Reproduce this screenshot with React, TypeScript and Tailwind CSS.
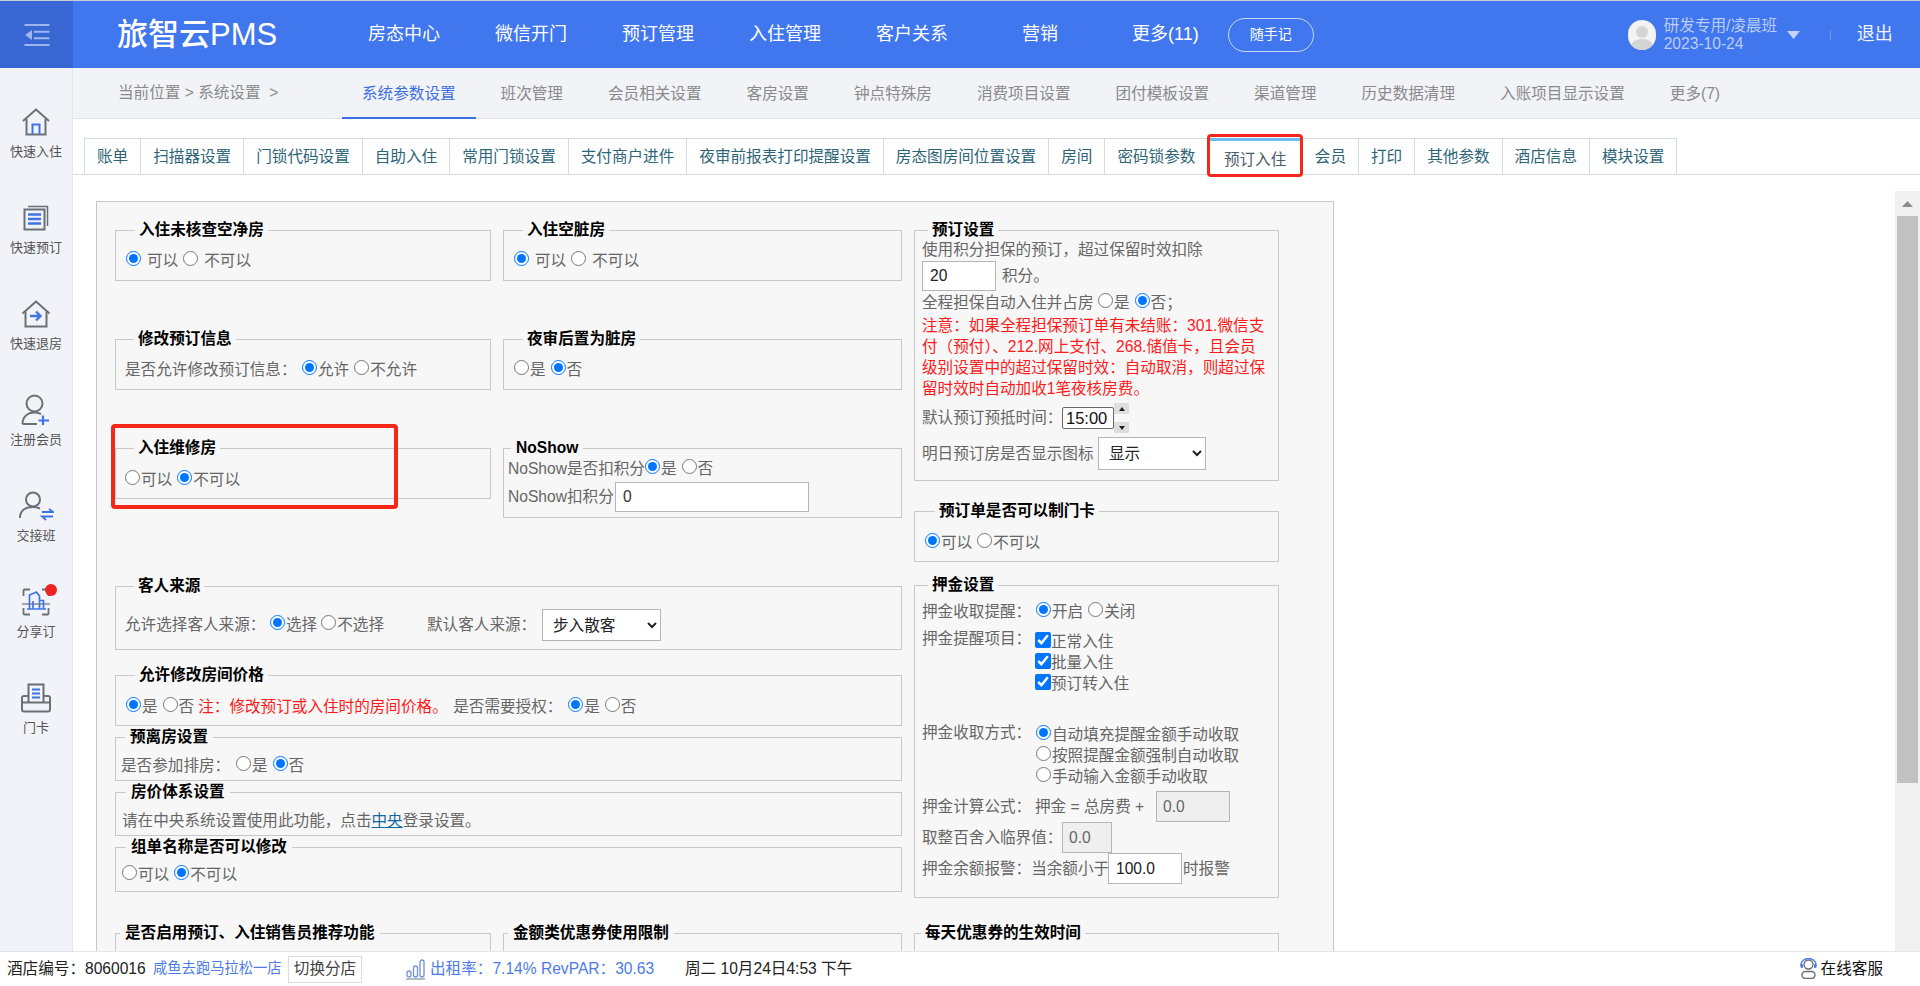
import React from "react";

const tabs: [string, string][] = [
  ["账单", ""],
  ["扫描器设置", ""],
  ["门锁代码设置", ""],
  ["自助入住", ""],
  ["常用门锁设置", ""],
  ["支付商户进件", ""],
  ["夜审前报表打印提醒设置", ""],
  ["房态图房间位置设置", ""],
  ["房间", ""],
  ["密码锁参数", ""],
  ["预订入住", "active"],
  ["会员", ""],
  ["打印", ""],
  ["其他参数", ""],
  ["酒店信息", ""],
  ["模块设置", ""],
];

const subnav = ["系统参数设置", "班次管理", "会员相关设置", "客房设置", "钟点特殊房", "消费项目设置", "团付模板设置", "渠道管理", "历史数据清理", "入账项目显示设置", "更多(7)"];

function Opt({ on, label, className = "", wide }: { on?: boolean; label: string; className?: string; wide?: boolean }) {
  return (
    <label className={`inline-flex items-center ${wide ? "gap-[6px]" : "gap-[1px]"} ${className}`}>
      <input type="radio" checked={!!on} readOnly className="w-[15px] h-[15px] mb-[4px] shrink-0" />
      <span>{label}</span>
    </label>
  );
}

function Box({ title, legend = "ml-[9px] px-[4px]", className = "", children }: { title: string; legend?: string; className?: string; children?: React.ReactNode }) {
  return (
    <fieldset className={`border border-[#c8c8c8] min-w-0 text-[#666] ${className}`}>
      <legend className={`font-bold text-black text-[15.6px] leading-[18px] ${legend}`}>{title}</legend>
      {children}
    </fieldset>
  );
}

function Row({ className = "", children }: { className?: string; children?: React.ReactNode }) {
  return <div className={`flex items-center h-[24px] whitespace-nowrap ${className}`}>{children}</div>;
}

const Gray = "#6b6f76";
const Blue = "#3f74e6";

const sideItems: { label: string; icon: React.ReactNode; badge?: boolean }[] = [
  {
    label: "快速入住",
    icon: (
      <svg width="30" height="28" viewBox="0 0 30 28" fill="none">
        <path d="M2 13 15 1.5 28 13" stroke={Gray} strokeWidth="2" />
        <path d="M5.5 11v15.5h19V11" stroke={Gray} strokeWidth="2" />
        <path d="M11.5 26V16.5h7V26" stroke={Blue} strokeWidth="2" />
      </svg>
    ),
  },
  {
    label: "快速预订",
    icon: (
      <svg width="26" height="26" viewBox="0 0 26 26" fill="none">
        <path d="M5 1.5h19.5V21" stroke={Gray} strokeWidth="1.5" />
        <rect x="1.5" y="4.5" width="20" height="20" stroke={Gray} strokeWidth="2" />
        <path d="M5 9.5h13M5 14h13M5 18.5h13" stroke={Blue} strokeWidth="2.4" />
      </svg>
    ),
  },
  {
    label: "快速退房",
    icon: (
      <svg width="30" height="28" viewBox="0 0 30 28" fill="none">
        <path d="M1.5 13.5 15 1.5 28.5 13.5" stroke={Gray} strokeWidth="2" />
        <path d="M4.5 11.5v15h21v-15" stroke={Gray} strokeWidth="2" />
        <path d="M9 16h10M15 11.5l4.5 4.5-4.5 4.5" stroke={Blue} strokeWidth="2.4" />
      </svg>
    ),
  },
  {
    label: "注册会员",
    icon: (
      <svg width="30" height="32" viewBox="0 0 30 32" fill="none">
        <circle cx="13.5" cy="9.5" r="8" stroke={Gray} strokeWidth="2" />
        <path d="M1.5 30c0-7 5-11.500 12-11.500 2.500 0 4.500.5 6.500 1.500M1.500 30H16" stroke={Gray} strokeWidth="2" />
        <path d="M22 21.500v9.500M17.500 26.500H28" stroke={Blue} strokeWidth="2.200" />
      </svg>
    ),
  },
  {
    label: "交接班",
    icon: (
      <svg width="36" height="30" viewBox="0 0 36 30" fill="none">
        <circle cx="15" cy="8.500" r="7" stroke={Gray} strokeWidth="2" />
        <path d="M2 27c0-7 5-11 13-11 3 0 5 .5 7 1.500" stroke={Gray} strokeWidth="2" />
        <path d="M24 21h11l-4-3M35 25.500H24l4 3.500" stroke={Blue} strokeWidth="1.800" />
      </svg>
    ),
  },
  {
    label: "分享订",
    badge: true,
    icon: (
      <svg width="28" height="28" viewBox="0 0 28 28" fill="none">
        <path d="M8 1.500H2.500a1 1 0 0 0-1 1V8M20 1.500h5.500a1 1 0 0 1 1 1V8M8 26.500H2.500a1 1 0 0 1-1-1V20M20 26.500h5.500a1 1 0 0 0 1-1V20" stroke={Gray} strokeWidth="1.800" />
        <path d="M0 16h28" stroke={Gray} strokeWidth="1.200" />
        <path d="M7.500 21V7l7-3 3 4v13M17.500 21v-8.500h4V21M11 21v-8" stroke={Blue} strokeWidth="1.700" />
        <path d="M5 21h19" stroke={Blue} strokeWidth="1.500" />
      </svg>
    ),
  },
  {
    label: "门卡",
    icon: (
      <svg width="30" height="30" viewBox="0 0 30 30" fill="none">
        <path d="M7.500 19V1.500h15V19" stroke={Gray} strokeWidth="2" />
        <path d="M7.500 13H3a2 2 0 0 0-2 2v11.500a2 2 0 0 0 2 2h24a2 2 0 0 0 2-2V15a2 2 0 0 0-2-2h-4.500M1 19.500h28" stroke={Gray} strokeWidth="2" />
        <path d="M11 6.500h8M11 10.500h8M11 14.500h8" stroke={Blue} strokeWidth="1.800" />
      </svg>
    ),
  },
];

export default function App() {
  return (
    <div className="h-[986px] w-[1920px] flex flex-col overflow-hidden bg-white text-[15.6px] text-[#666] font-['Liberation_Sans','Noto_Sans_CJK_SC',sans-serif]">
      {/* Header */}
      <header className="h-[68px] shrink-0 flex items-center bg-[#4076ee] border-t border-[#c9cdd6] text-white">
        <div className="w-[73px] h-full bg-[#3866d2] flex items-center justify-center">
          <svg width="26" height="22" viewBox="0 0 26 22" fill="none">
            <path d="M0.500 1h25M0.500 21h25M10 7.800h15.500M10 14.200h15.500" stroke="#9db7ee" strokeWidth="2" />
            <path d="M1 11l7-5v10z" fill="#9db7ee" />
          </svg>
        </div>
        <div className="ml-[44px] w-[251px] text-[31px] leading-none font-medium whitespace-nowrap">旅智云PMS</div>
        <nav className="flex items-center text-[18px] whitespace-nowrap">
          <span>房态中心</span>
          <span className="ml-[55px]">微信开门</span>
          <span className="ml-[55px]">预订管理</span>
          <span className="ml-[55px]">入住管理</span>
          <span className="ml-[55px]">客户关系</span>
          <span className="ml-[74px]">营销</span>
          <span className="ml-[74px]">更多(11)</span>
        </nav>
        <div className="ml-[29px] w-[86px] h-[34px] rounded-full border border-white/70 flex items-center justify-center text-[14px]">随手记</div>
        <div className="ml-[314px] w-[28px] h-[30px] rounded-full bg-[#f3f3f3] overflow-hidden shrink-0">
          <svg width="28" height="30" viewBox="0 0 28 30">
            <circle cx="14" cy="12" r="6" fill="#d4d4d4" />
            <ellipse cx="14" cy="26" rx="11" ry="7" fill="#d4d4d4" />
          </svg>
        </div>
        <div className="ml-[8px] w-[117px] flex flex-col text-[15.6px] leading-[18px] text-[#bccdf6] whitespace-nowrap">
          <span>研发专用/凌晨班</span>
          <span>2023-10-24</span>
        </div>
        <svg className="ml-[6px] shrink-0" width="13" height="8" viewBox="0 0 13 8"><path d="M0 0h13L6.500 8z" fill="#c4d3f7" /></svg>
        <div className="ml-[30px] w-px h-[10px] bg-[#6f97ef]" />
        <span className="ml-[26px] text-[18px] text-[#eef2fd]">退出</span>
      </header>

      <div className="flex-1 flex min-h-0">
        {/* Sidebar */}
        <aside className="w-[73px] shrink-0 bg-[#f1f3f8] border-r border-[#e4e7f0] pt-[36px] flex flex-col">
          {sideItems.map((it) => (
            <div key={it.label} className="h-[96px] shrink-0 flex flex-col items-center">
              <div className="relative h-[36px] w-full flex items-center justify-center">
                {it.icon}
                {it.badge && <span className="absolute left-[45px] top-[0px] w-[12px] h-[12px] rounded-full bg-[#ee2223]" />}
              </div>
              <span className="h-[24px] leading-[24px] text-[13px] text-[#555]">{it.label}</span>
            </div>
          ))}
        </aside>

        <div className="flex-1 min-w-0 flex flex-col">
          {/* Sub nav */}
          <div className="h-[51px] shrink-0 bg-[#f1f3f7] border-b border-[#dfe1e6] flex text-[#8a8a8a] whitespace-nowrap">
            <div className="ml-[45px] w-[224px] h-[50px] flex items-center">当前位置&nbsp;&gt;&nbsp;系统设置&nbsp;&nbsp;&gt;</div>
            {subnav.map((s, i) => (
              <div key={s} className={`px-[20px] mr-[5px] h-[51px] flex items-center ${i === 0 ? "text-[#3d6fe0] border-b-2 border-[#3a6fe0] pt-[2px]" : ""}`}>{s}</div>
            ))}
          </div>

          {/* Tabs */}
          <div className="h-[56px] shrink-0 pt-[19px]">
            <div className="h-[37px] border-b border-[#d2dcdc] pl-[11px] flex">
              {tabs.map(([t, a], i) =>
                a ? (
                  <div key={t} className="h-[37px] px-[15.500px] bg-white border-t-[3px] border-t-[#6cbdf0] border-l border-l-[#d2dcdc] text-[#4c5c66] flex items-center pt-[3px] whitespace-nowrap">{t}</div>
                ) : (
                  <div key={t} className={`h-[37px] px-[12px] border-t border-l border-[#d2dcdc] text-[#2d6577] flex items-center whitespace-nowrap ${i === tabs.length - 1 ? "border-r" : ""}`}>{t}</div>
                )
              )}
            </div>
          </div>

          {/* Main */}
          <div className="flex-1 min-h-0 flex">
            <div className="flex-1 min-w-0 overflow-hidden pl-[23px] pt-[26px]">
              <div className="w-[1238px] h-[900px] bg-[#f7f7f7] border border-[#c8c8c8] pl-[18px] pt-[19px] flex gap-[12px]">
                {/* Left two columns */}
                <div className="w-[787px] shrink-0 flex flex-col">
                  <div className="flex gap-[12px]">
                    <Box title="入住未核查空净房" className="w-[376px] h-[60px] pt-[10px] pl-[10px]">
                      <Row>
                        <Opt on label="可以" wide />
                        <Opt label="不可以" wide className="ml-[5px]" />
                      </Row>
                    </Box>
                    <Box title="入住空脏房" className="w-[399px] h-[60px] pt-[10px] pl-[10px]">
                      <Row>
                        <Opt on label="可以" wide />
                        <Opt label="不可以" wide className="ml-[5px]" />
                      </Row>
                    </Box>
                  </div>
                  <div className="flex gap-[12px] mt-[49px]">
                    <Box title="修改预订信息" className="w-[376px] h-[60px] pt-[10px] pl-[9px]">
                      <Row>
                        <span className="w-[177px]">是否允许修改预订信息：</span>
                        <Opt on label="允许" />
                        <Opt label="不允许" className="ml-[5px]" />
                      </Row>
                    </Box>
                    <Box title="夜审后置为脏房" className="w-[399px] h-[60px] pt-[10px] pl-[10px]">
                      <Row>
                        <Opt label="是" />
                        <Opt on label="否" className="ml-[5px]" />
                      </Row>
                    </Box>
                  </div>
                  <div className="flex gap-[12px] mt-[49px]">
                    <Box title="入住维修房" className="w-[376px] h-[60px] pt-[11px] pl-[9px]">
                      <Row>
                        <Opt label="可以" />
                        <Opt on label="不可以" className="ml-[5px]" />
                      </Row>
                    </Box>
                    <Box title="NoShow" legend="ml-[3px] px-[5px]" className="w-[399px] h-[79px] pl-[4px]">
                      <Row className="h-[23px] pt-0">
                        <span>NoShow是否扣积分</span>
                        <Opt on label="是" />
                        <Opt label="否" className="ml-[5px]" />
                      </Row>
                      <div className="flex items-center mt-[1px]">
                        <span className="w-[107px] whitespace-nowrap">NoShow扣积分</span>
                        <input readOnly value="0" className="w-[194px] h-[30px] bg-white border border-[#b5b5b5] px-[7px] text-[#333]" />
                      </div>
                    </Box>
                  </div>
                  <Box title="客人来源" className="w-[787px] h-[73px] mt-[59px] pl-[9px] pt-[14px]">
                    <Row className="h-[32px]">
                      <span className="w-[145px]">允许选择客人来源：</span>
                      <Opt on label="选择" />
                      <Opt label="不选择" className="ml-[4px]" />
                      <span className="ml-[43px] w-[115px]">默认客人来源：</span>
                      <select className="w-[119px] h-[32px] bg-white border border-[#b5b5b5] pl-[6px] text-[#222]" defaultValue="步入散客">
                        <option>步入散客</option>
                      </select>
                    </Row>
                  </Box>
                  <Box title="允许修改房间价格" className="w-[787px] h-[60px] mt-[16px] pt-[11px] pl-[10px]">
                    <Row>
                      <Opt on label="是" />
                      <Opt label="否" className="ml-[5px]" />
                      <span className="ml-[4px] w-[255px] text-[#ff1a1a]">注：修改预订或入住时的房间价格。</span>
                      <span className="w-[115px]">是否需要授权：</span>
                      <Opt on label="是" />
                      <Opt label="否" className="ml-[5px]" />
                    </Row>
                  </Box>
                  <Box title="预离房设置" legend="ml-[4px] px-[5px]" className="w-[787px] h-[53px] mt-[2px] pt-[8px] pl-[5px]">
                    <Row>
                      <span className="w-[115px]">是否参加排房：</span>
                      <Opt label="是" />
                      <Opt on label="否" className="ml-[5px]" />
                    </Row>
                  </Box>
                  <Box title="房价体系设置" legend="ml-[4px] px-[5px]" className="w-[787px] h-[53px] mt-[2px] pt-[8px] pl-[6px]">
                    <Row>
                      请在中央系统设置使用此功能，点击<span className="text-[#15679f] underline">中央</span>登录设置。
                    </Row>
                  </Box>
                  <Box title="组单名称是否可以修改" legend="ml-[4px] px-[5px]" className="w-[787px] h-[54px] mt-[2px] pt-[7px] pl-[6px]">
                    <Row>
                      <Opt label="可以" />
                      <Opt on label="不可以" className="ml-[5px]" />
                    </Row>
                  </Box>
                  <div className="flex gap-[12px] mt-[32px]">
                    <Box title="是否启用预订、入住销售员推荐功能" legend="ml-[4px] px-[5px]" className="w-[376px] h-[80px]" />
                    <Box title="金额类优惠券使用限制" legend="ml-[4px] px-[5px]" className="w-[399px] h-[80px]" />
                  </div>
                </div>

                {/* Right column */}
                <div className="w-[365px] shrink-0 flex flex-col">
                  <Box title="预订设置" legend="ml-[6px] px-[4px]" className="h-[260px] pl-[7px] pt-[1px]">
                    <div className="h-[20px] leading-[20px] whitespace-nowrap">使用积分担保的预订，超过保留时效扣除</div>
                    <div className="flex items-center h-[30px] mt-[1px]">
                      <input readOnly value="20" className="w-[74px] h-[30px] bg-white border border-[#b5b5b5] px-[7px] text-[#222]" />
                      <span className="ml-[6px]">积分。</span>
                    </div>
                    <Row className="h-[21px]">
                      <span className="w-[176px]">全程担保自动入住并占房</span>
                      <Opt label="是" />
                      <Opt on label="否；" className="ml-[5px]" />
                    </Row>
                    <div className="text-[#ff1a1a] leading-[21px] whitespace-nowrap">
                      注意：如果全程担保预订单有未结账：301.微信支
                      <br />
                      付（预付）、212.网上支付、268.储值卡，且会员
                      <br />
                      级别设置中的超过保留时效：自动取消，则超过保
                      <br />
                      留时效时自动加收1笔夜核房费。
                    </div>
                    <div className="flex items-center h-[30px] mt-[4px]">
                      <span className="w-[140px] whitespace-nowrap">默认预订预抵时间：</span>
                      <input readOnly value="15:00" className="w-[52px] h-[22px] bg-white border border-[#666] rounded-[2px] px-[3px] text-[16.500px] text-[#111]" />
                      <div className="flex flex-col justify-between h-[30px] w-[15px]">
                        <span className="h-[11px] bg-[#dedede] flex items-center justify-center"><svg width="6" height="4"><path d="M3 0l3 4H0z" fill="#222" /></svg></span>
                        <span className="h-[11px] bg-[#dedede] flex items-center justify-center"><svg width="6" height="4"><path d="M3 4l3-4H0z" fill="#222" /></svg></span>
                      </div>
                    </div>
                    <div className="flex items-center h-[33px] mt-[4px]">
                      <span className="w-[176px] whitespace-nowrap">明日预订房是否显示图标</span>
                      <select className="w-[108px] h-[33px] bg-white border border-[#b5b5b5] pl-[6px] text-[#222]" defaultValue="显示">
                        <option>显示</option>
                      </select>
                    </div>
                  </Box>
                  <Box title="预订单是否可以制门卡" legend="ml-[10px] px-[4px]" className="h-[60px] mt-[21px] pl-[10px] pt-[11px]">
                    <Row>
                      <Opt on label="可以" />
                      <Opt label="不可以" className="ml-[5px]" />
                    </Row>
                  </Box>
                  <Box title="押金设置" legend="ml-[6px] px-[4px]" className="h-[322px] mt-[14px] pl-[7px] pt-[6px]">
                    <Row className="h-[24px]">
                      <span className="w-[114px]">押金收取提醒：</span>
                      <Opt on label="开启" />
                      <Opt label="关闭" className="ml-[5px]" />
                    </Row>
                    <div className="flex mt-[3px] whitespace-nowrap">
                      <span className="w-[113px] leading-[24px]">押金提醒项目：</span>
                      <div className="flex flex-col leading-[21px] pt-[4px]">
                        {["正常入住", "批量入住", "预订转入住"].map((t) => (
                          <label key={t} className="flex items-center h-[21px]">
                            <input type="checkbox" checked readOnly className="w-[16px] h-[16px] mb-[4px]" />
                            {t}
                          </label>
                        ))}
                      </div>
                    </div>
                    <div className="flex mt-[27px] whitespace-nowrap">
                      <span className="w-[114px] leading-[24px]">押金收取方式：</span>
                      <div className="flex flex-col leading-[21px] pt-[3px]">
                        <Opt on label="自动填充提醒金额手动收取" className="h-[21px]" />
                        <Opt label="按照提醒金额强制自动收取" className="h-[21px]" />
                        <Opt label="手动输入金额手动收取" className="h-[21px]" />
                      </div>
                    </div>
                    <div className="flex items-center h-[31px] mt-[4px] whitespace-nowrap">
                      <span className="w-[113px]">押金计算公式：</span>
                      <span className="w-[121px]">押金 = 总房费 +</span>
                      <input readOnly value="0.0" className="w-[74px] h-[31px] bg-[#efefef] border border-[#b5b5b5] px-[6px] text-[#666]" />
                    </div>
                    <div className="flex items-center h-[31px] whitespace-nowrap">
                      <span className="w-[140px]">取整百舍入临界值：</span>
                      <input readOnly value="0.0" className="w-[50px] h-[31px] bg-[#efefef] border border-[#b5b5b5] px-[6px] text-[#666]" />
                    </div>
                    <div className="flex items-center h-[31px] whitespace-nowrap">
                      <span className="w-[186px]">押金余额报警：当余额小于</span>
                      <input readOnly value="100.0" className="w-[74px] h-[31px] bg-white border border-[#b5b5b5] px-[7px] text-[#222]" />
                      <span className="ml-[1px]">时报警</span>
                    </div>
                  </Box>
                  <Box title="每天优惠券的生效时间" legend="ml-[6px] px-[4px]" className="h-[80px] mt-[26px]" />
                </div>
              </div>
            </div>

            {/* Scrollbar */}
            <div className="w-[25px] shrink-0 mt-[16px] bg-[#f1f1f1] flex flex-col items-center pt-[10px]">
              <svg width="11" height="6"><path d="M5.500 0L11 6H0z" fill="#8c8c8c" /></svg>
              <div className="w-[21px] h-[567px] mt-[9px] bg-[#c1c1c1]" />
            </div>
          </div>
        </div>
      </div>

      {/* Status bar */}
      <footer className="h-[35px] shrink-0 bg-white border-t border-[#e3e4ee] flex items-center whitespace-nowrap text-[#222] relative z-10">
        <span className="ml-[7px] w-[146px]">酒店编号：8060016</span>
        <span className="text-[14.300px] text-[#4d7be8] w-[135px]">咸鱼去跑马拉松一店</span>
        <span className="w-[74px] h-[27px] border border-[#dcdcdc] flex items-center justify-center text-[#444]">切换分店</span>
        <svg className="ml-[44px]" width="19" height="21" viewBox="0 0 19 21" fill="none">
          <path d="M0 20h19" stroke="#9aa3b5" strokeWidth="1.500" />
          <rect x="1" y="12" width="4" height="6" rx="2" stroke="#6f8fe0" strokeWidth="1.300" />
          <rect x="7.500" y="7" width="4" height="11" rx="2" stroke="#6f8fe0" strokeWidth="1.300" />
          <rect x="14" y="1" width="4" height="17" rx="2" stroke="#6f8fe0" strokeWidth="1.300" />
        </svg>
        <span className="ml-[5px] w-[255px] text-[#4d7be8]">出租率：7.14% RevPAR：30.63</span>
        <span className="text-[#222]">周二 10月24日4:53 下午</span>
        <div className="ml-auto mr-[37px] flex items-center gap-[4px]">
          <svg width="17" height="21" viewBox="0 0 17 21" fill="none">
            <circle cx="8.500" cy="6.500" r="4.500" stroke="#6b6f76" strokeWidth="1.400" />
            <path d="M1 8V6.500a7.500 6 0 0 1 15 0V8" stroke="#4d7be8" strokeWidth="1.400" />
            <rect x="0.500" y="6" width="2.500" height="4" rx="1" fill="#4d7be8" />
            <rect x="14" y="6" width="2.500" height="4" rx="1" fill="#4d7be8" />
            <rect x="2" y="13.500" width="13" height="7" rx="3.500" stroke="#6b6f76" strokeWidth="1.400" />
          </svg>
          <span className="text-[#111]">在线客服</span>
        </div>
      </footer>

      {/* Annotation marks lying over the page */}
      <div className="absolute left-[1207px] top-[134px] w-[96px] h-[43px] border-[3px] border-[#f52718] rounded-[4px] pointer-events-none" />
      <div className="absolute left-[111px] top-[424px] w-[287px] h-[85px] border-[4px] border-[#f52718] rounded-[4px] pointer-events-none" />
    </div>
  );
}
